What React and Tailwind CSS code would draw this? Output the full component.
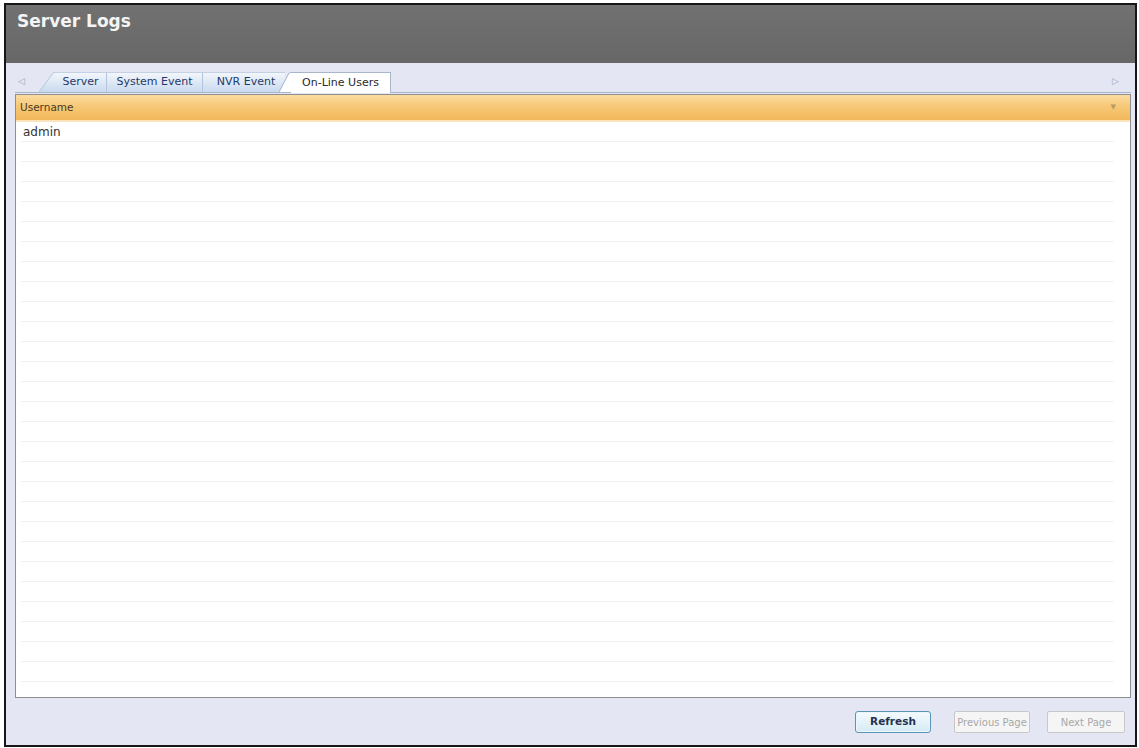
import React from "react";

const rows = Array.from({ length: 28 }, (_, i) => (i === 0 ? "admin" : ""));

const InactiveTab = ({ label, className = "" }) => (
  <div
    className={`h-[20px] flex items-center justify-center border-r border-[#b3c4dc] bg-gradient-to-b from-[#f3f6fb] to-[#c9daef] text-[11px] text-[#1e3a6a] ${className}`}
  >
    {label}
  </div>
);

const App = () => {
  return (
    <div className="w-[1139px] h-[748px] bg-white pt-[3px] pl-[4px] pr-[2px] pb-[1px] font-['DejaVu_Sans',sans-serif]">
      <div className="h-full border-2 border-[#161616] flex flex-col">
        {/* header */}
        <div className="h-[58px] bg-gradient-to-b from-[#717171] to-[#676767] px-[11px] pt-[4px]">
          <h1 className="text-[17px] font-bold text-[#f4f4f4]">Server Logs</h1>
        </div>

        <div className="flex-1 bg-[#e4e7f3] flex flex-col pl-[9px] pr-[4px]">
          {/* tab strip */}
          <div className="h-[30px] flex items-end relative border-b border-[#a9b6c9]">
            <span className="absolute left-[3px] top-[12px] text-[9px] text-[#9aa3b2]">◁</span>
            <span className="absolute right-[12px] top-[12px] text-[9px] text-[#9aa3b2]">▷</span>
            <div className="flex items-end pl-[24px]">
              <svg width="16" height="20" viewBox="0 0 16 20" className="block">
                <defs>
                  <linearGradient id="tg" x1="0" y1="0" x2="0" y2="1">
                    <stop offset="0" stopColor="#f3f6fb" />
                    <stop offset="1" stopColor="#c9daef" />
                  </linearGradient>
                </defs>
                <polygon points="0,20 14,1 16,0 16,20" fill="url(#tg)" />
                <polyline points="0,20 14,1 16,0" fill="none" stroke="#b6c5da" strokeWidth="1" />
              </svg>
              <InactiveTab label="Server" className="w-[52px] border-t border-t-[#c4d1e3]" />
              <InactiveTab label="System Event" className="w-[96px] border-t border-t-[#c4d1e3]" />
              <InactiveTab label="NVR Event" className="w-[82px] pl-[4px] border-t border-t-[#c4d1e3] border-r-0" />
              <svg width="12" height="20" viewBox="0 0 12 20" className="block -ml-[6px]">
                <polygon points="0,21 10,1 12,0 12,21" fill="#ffffff" />
                <polyline points="0,20 10,1 12,0" fill="none" stroke="#a9b6c9" strokeWidth="1" />
              </svg>
              <div className="h-[21px] w-[100px] -mb-px bg-white border-t border-r border-[#a9b6c9] flex items-center justify-center text-[11px] text-[#2a2a2a]">
                On-Line Users
              </div>
            </div>
          </div>

          {/* grid */}
          <div className="flex-1 flex flex-col mt-[1px] border border-[#8f8f8f] bg-white overflow-hidden">
            <div className="h-[27px] shrink-0 flex items-center justify-between px-[4px] bg-gradient-to-b from-[#fbdc9f] via-[#f6c673] to-[#f3b85c] border-b-[2px] border-[#fbe4bb]">
              <span className="text-[10.5px] text-[#4b3a1e]">Username</span>
              <span className="text-[7px] text-[#b99a65] mr-[10px]">▼</span>
            </div>
            <div className="flex-1 overflow-hidden">
              {rows.map((name, i) => (
                <div
                  key={i}
                  className="h-[20px] ml-[5px] mr-[16px] border-b border-[#f1f1f1] flex items-center pl-[2px] text-[12px] text-[#333333]"
                >
                  {name}
                </div>
              ))}
            </div>
          </div>

          {/* footer */}
          <div className="h-[47px] shrink-0 flex items-start justify-end pt-[13px] pr-[6px]">
            <button className="w-[76px] h-[22px] rounded-[3px] border border-[#5b94b5] bg-gradient-to-b from-[#f5fbfe] to-[#d5eaf5] text-[10.5px] font-bold text-[#24324f] shadow-[inset_0_0_0_1px_#e9f6fc]">
              Refresh
            </button>
            <button className="ml-[23px] w-[76px] h-[22px] rounded-[2px] border border-[#c8c8c8] bg-[#f5f5f5] text-[10px] text-[#a8a8a8]">
              Previous Page
            </button>
            <button className="ml-[17px] w-[78px] h-[22px] rounded-[2px] border border-[#c8c8c8] bg-[#f5f5f5] text-[10px] text-[#a8a8a8]">
              Next Page
            </button>
          </div>
        </div>
      </div>
    </div>
  );
};

export default App;
